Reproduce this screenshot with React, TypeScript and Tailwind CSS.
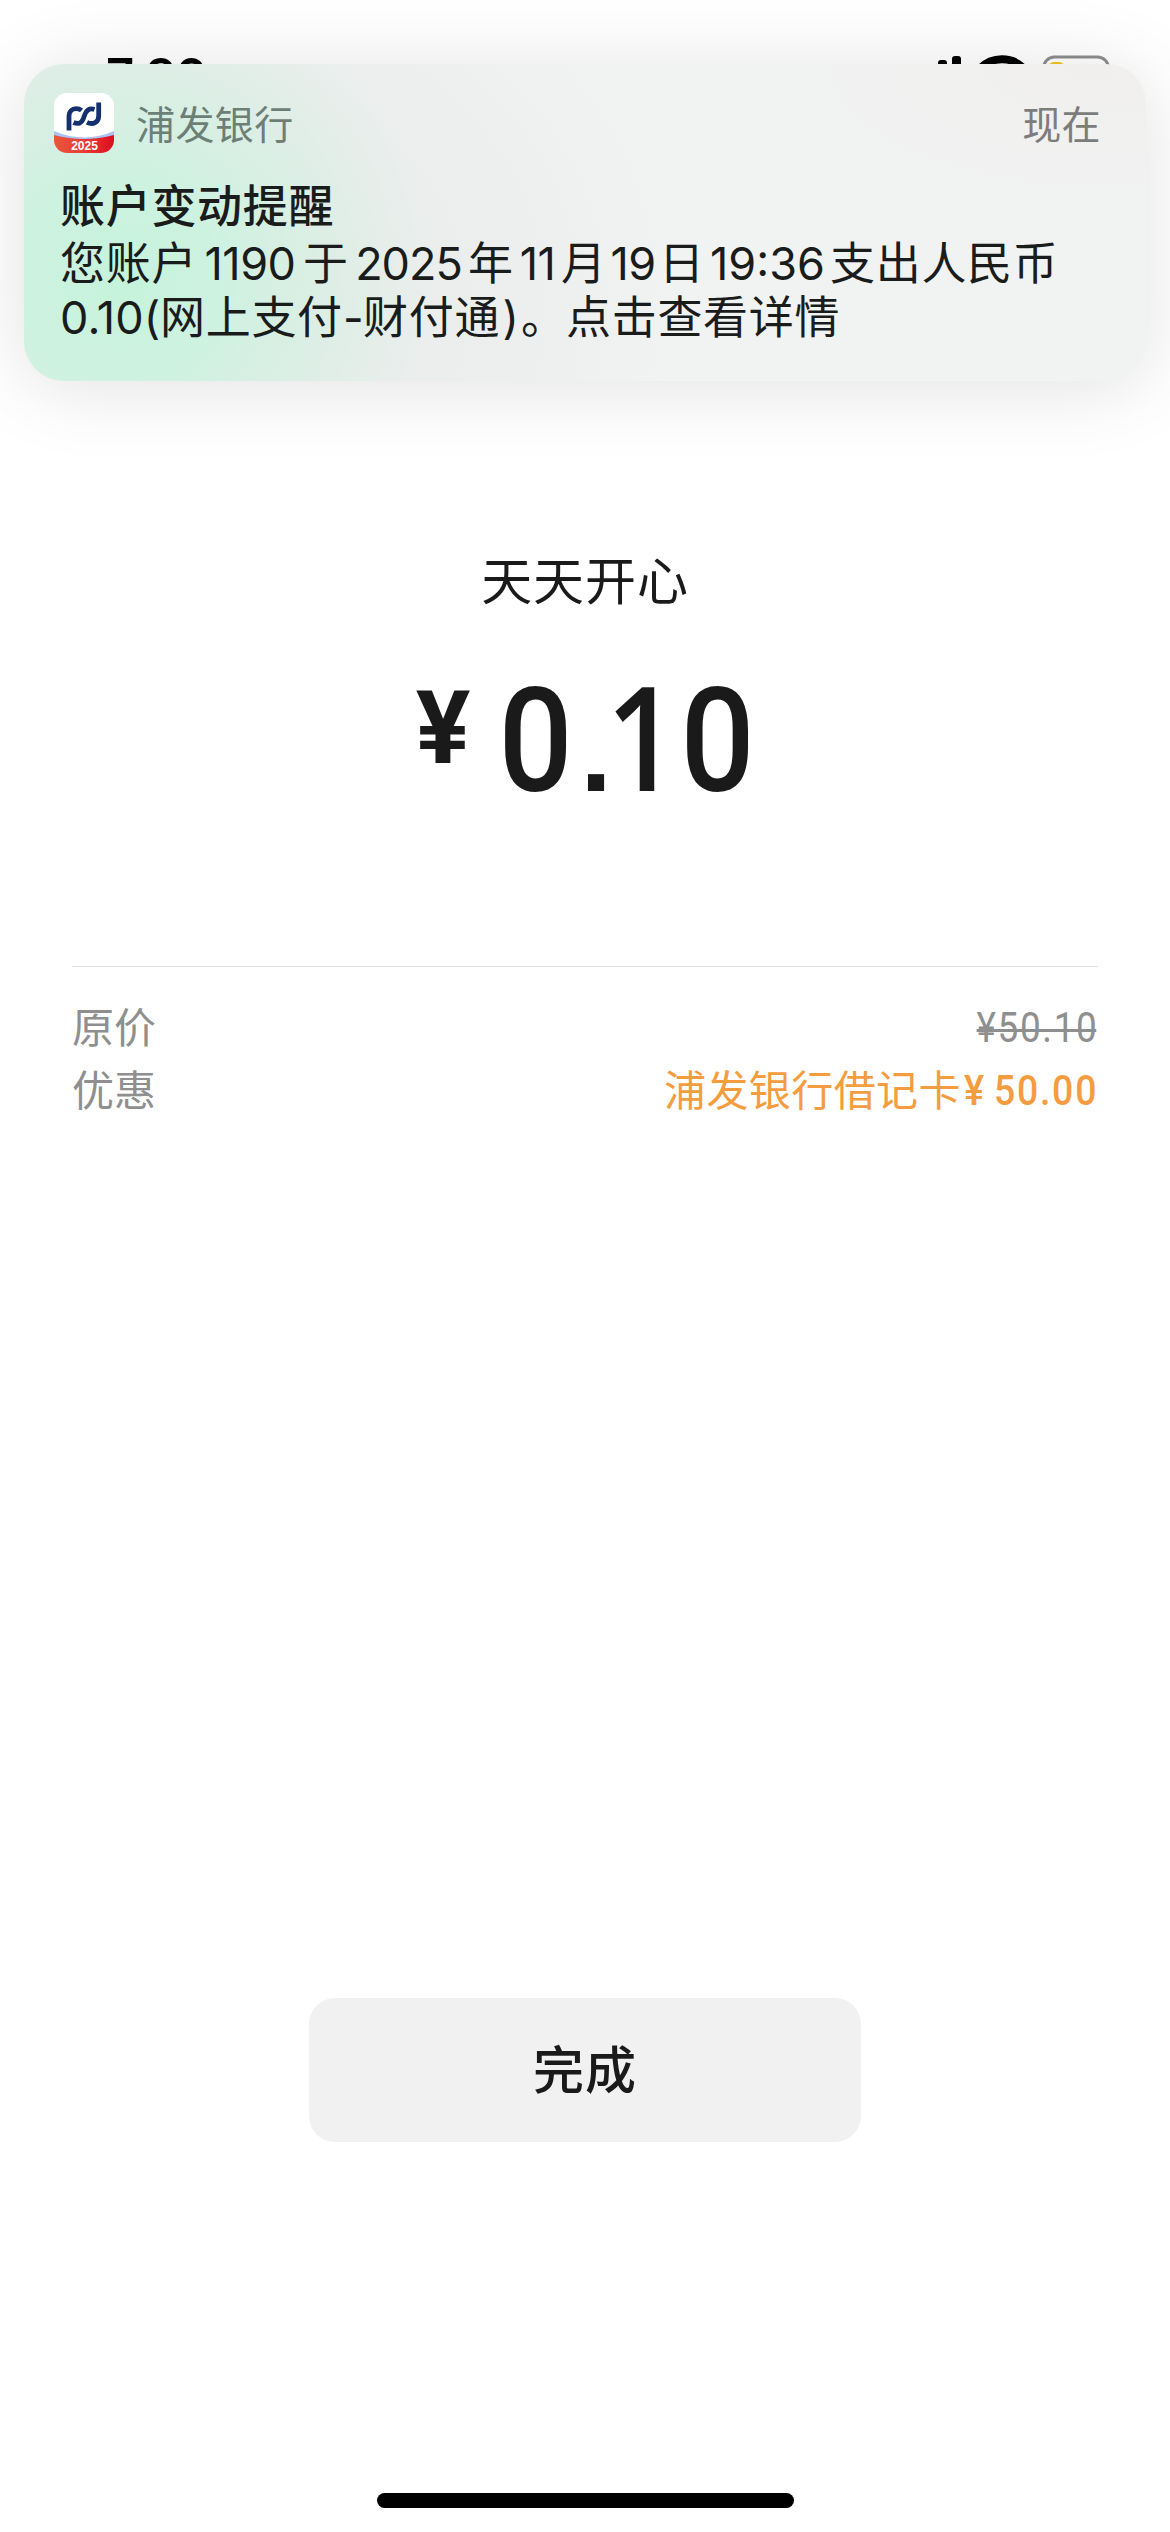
import React from 'react';

const SANS = "font-[Inter,'Noto_Sans_CJK_SC',sans-serif]";

// --- Status bar ---

const SignalIcon = () => (
  <svg width="51" height="36" viewBox="0 0 51 36" fill="#000">
    <rect x="0" y="20" width="9" height="14" rx="3" />
    <rect x="14" y="13" width="9" height="21" rx="3" />
    <rect x="27" y="5" width="9" height="29" rx="3" />
    <rect x="41" y="1" width="9" height="33" rx="3" />
  </svg>
);

const WifiIcon = () => (
  <svg width="50" height="36" viewBox="0 0 50 36" fill="none" stroke="#000">
    <path d="M3 13.5a31 31 0 0 1 44 0" strokeWidth="8" />
    <path d="M11 22a20 20 0 0 1 28 0" strokeWidth="6" />
    <path d="M25 35l-7-7a10 10 0 0 1 14 0z" fill="#000" stroke="none" />
  </svg>
);

const BatteryIcon = () => (
  <svg width="74" height="36" viewBox="0 0 74 36" fill="none">
    <rect x="1.5" y="2" width="65" height="33" rx="11" stroke="#8e8e8e" strokeWidth="3" />
    <rect x="6" y="7" width="17" height="23" rx="6" fill="#f5c51c" />
    <path d="M70 13c3 1 4 3 4 5s-1 4-4 5z" fill="#8e8e8e" />
  </svg>
);

const StatusBar = () => (
  <div className="flex h-[141px] items-start justify-between pl-[106px] pr-[54px] pt-[54px]">
    <span className="text-[49px] font-semibold leading-[46px] tracking-[-1.5px] text-black">7:36</span>
    <div className="flex items-start gap-[15px] pt-[1px]">
      <SignalIcon />
      <WifiIcon />
      <BatteryIcon />
    </div>
  </div>
);

// --- Notification ---

const BankIcon = () => (
  <svg width="60" height="60" viewBox="0 0 60 60" className="shrink-0">
    <defs>
      <clipPath id="tile">
        <rect width="60" height="60" rx="13" />
      </clipPath>
      <linearGradient id="red" x1="0" y1="0" x2="1" y2="0">
        <stop offset="0" stopColor="#e8563c" />
        <stop offset="0.5" stopColor="#ee3b36" />
        <stop offset="1" stopColor="#dc0d20" />
      </linearGradient>
    </defs>
    <g clipPath="url(#tile)">
      <rect width="60" height="60" fill="#fff" />
      <path d="M0 38q30 13 60 0v8H0z" fill="#a9c4f3" />
      <path d="M0 42q30 8 60 0v18H0z" fill="url(#red)" />
      <g fill="none" stroke="#14306f" strokeWidth="4.8">
        <path d="M15 37.500V23c0-4.500 3-7.300 7-7.300 2.500 0 4 .5 5.500 1.800" />
        <path d="M19.500 29.500c5 2.200 8.300.5 10-4.200l1-3c1.500-5 5-7.500 10-5.800" />
        <path d="M33 29.300c6 3 11.700 0 11.700-6.300V9.500" />
      </g>
      <text
        x="30.500"
        y="57"
        textAnchor="middle"
        fill="#fff"
        className="font-['Liberation_Sans'] text-[12px] font-bold"
      >
        2025
      </text>
    </g>
  </svg>
);

const Notification = () => (
  <div className="absolute left-[24px] top-[64px] h-[317px] w-[1122px] rounded-[40px] bg-[#f1f2f2] bg-[radial-gradient(ellipse_310px_310px_at_95px_215px,#c5f3db_0%,#cdf2e0_30%,#dceee5_65%,rgba(236,239,238,0)_100%),radial-gradient(ellipse_300px_140px_at_95%_0%,#f0efed_0%,rgba(240,239,237,0)_100%),radial-gradient(ellipse_520px_420px_at_130px_240px,#e9edeb_0%,#ebeeed_60%,rgba(241,242,242,0)_100%)] px-[30px] pt-[29px] shadow-[0_6px_80px_rgba(0,0,0,0.12)]">
    <div className="flex items-start">
      <BankIcon />
      <span className="ml-[22px] mt-[2px] text-[39px] leading-[60px] tracking-[0.4px] text-[#6c7f76]">浦发银行</span>
      <span className="ml-auto mr-[15px] mt-[2px] text-[39px] leading-[60px] tracking-[0.4px] text-[#7c7c7a]">现在</span>
    </div>
    <div className="ml-[6px] mt-[25px] whitespace-nowrap text-[45px] leading-[54px] tracking-[0.7px] text-[#1a1c1b]">
      <h2 className="font-medium">账户变动提醒</h2>
      <p className="mt-[3px] flex">
        <span className="w-[137px]">您账户</span>
        <span className="w-[106px] text-center tracking-[-0.5px]">1190</span>
        <span className="w-[46px]">于</span>
        <span className="w-[119px] text-center tracking-[-1px]">2025</span>
        <span className="w-[46px]">年</span>
        <span className="w-[47px] text-center tracking-[-0.5px]">11</span>
        <span className="w-[46px]">月</span>
        <span className="w-[52px] text-center tracking-[-0.5px]">19</span>
        <span className="w-[46px]">日</span>
        <span className="w-[125px] text-center tracking-[0px]">19:36</span>
        <span>支出人民币</span>
      </p>
      <p className="flex">
        <span className="w-[100px] tracking-[0.2px]">0.10(</span>
        <span className="w-[183px]">网上支付</span>
        <span className="w-[20px] text-center">-</span>
        <span className="w-[138px]">财付通</span>
        <span className="w-[20px] text-center">)</span>
        <span className="w-[45px]">。</span>
        <span>点击查看详情</span>
      </p>
    </div>
  </div>
);

// --- Payment result ---

const Amount = () => (
  <div className="flex items-start justify-center font-[Roboto] font-medium text-[#1a1a1a]">
    <span className="mt-[10px] w-[64px] text-center text-[102px] font-bold leading-[102px]">¥</span>
    <span className="ml-[19px] mt-[-5px] flex items-baseline text-[145px] leading-[145px]">
      <span className="w-[83px] scale-x-[0.9] text-center">0</span>
      <span className="w-[38px] text-center font-['Liberation_Sans'] text-[114px] font-bold">.</span>
      <span className="ml-[-9px] w-[70px] origin-left scale-x-[0.87] font-['Open_Sans'] font-semibold">1</span>
      <span className="w-[83px] scale-x-[0.9] text-center">0</span>
    </span>
  </div>
);

export default function App() {
  return (
    <div className={`${SANS} relative flex h-[2532px] w-[1170px] flex-col overflow-hidden bg-white`}>
      <StatusBar />
      <Notification />

      <main className="flex flex-1 flex-col px-[72px]">
        <p className="mt-[411px] text-center text-[51px] leading-[60px] tracking-[0.9px] text-[#1a1a1a]">天天开心</p>
        <div className="mt-[55px] h-[299px]">
          <Amount />
        </div>

        <div className="border-t border-[#e3e3e3] pt-[29px] text-[42px] leading-[63px]">
          <div className="flex justify-between text-[#8f8f8f]">
            <span>原价</span>
            <span className="relative origin-right scale-x-[0.88] font-[Roboto] tracking-[1.8px]">
              ¥50.10
              <span className="absolute left-0 right-[2px] top-[33px] h-[3px] bg-[#8f8f8f]" />
            </span>
          </div>
          <div className="flex justify-between">
            <span className="text-[#8f8f8f]">优惠</span>
            <span className="flex text-[#f49d40]">
              <span className="tracking-[0.4px]">浦发银行借记卡</span>
              <span className="w-[26px] scale-x-[0.9] text-center font-[Roboto] font-medium">¥</span>
              <span className="ml-[-6px] origin-right scale-x-[0.89] font-[Roboto] font-medium tracking-[2px]">
                50.00
              </span>
            </span>
          </div>
        </div>

        <button className="mx-auto mt-[876px] h-[144px] w-[552px] rounded-[26px] bg-[#f1f1f1] pt-[3px] text-[51px] font-medium tracking-[0.9px] text-[#1a1a1a]">
          完成
        </button>
      </main>

      <div className="mx-auto mb-[24px] h-[15px] w-[417px] rounded-full bg-black" />
    </div>
  );
}
